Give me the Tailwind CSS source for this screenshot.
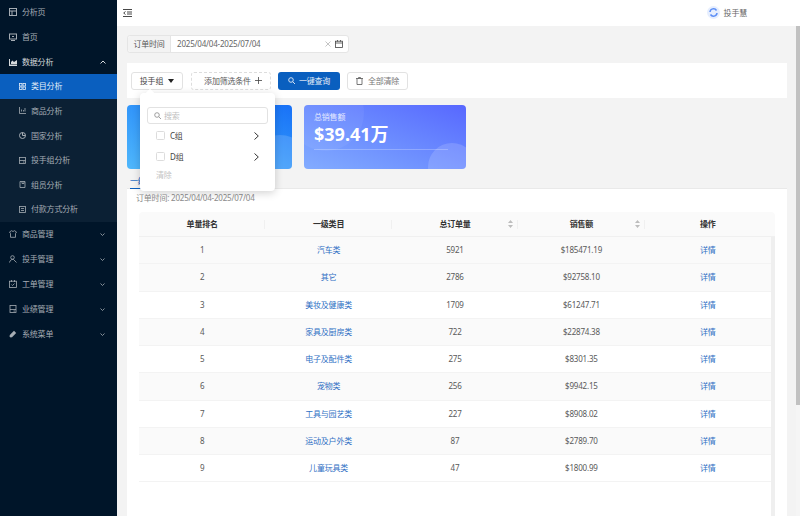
<!DOCTYPE html>
<html lang="zh"><head><meta charset="utf-8"><script src="https://cdn.jsdelivr.net/npm/@tailwindcss/browser@4"></script></head>
<body class="overflow-hidden">
<div class="flex w-[800px] h-[516px] overflow-hidden bg-[#f3f3f3] text-[8px] leading-[12px] tracking-[-0.2px] text-[#595959] font-['Noto_Sans','Noto_Sans_CJK_SC',sans-serif]">
  <!-- sidebar -->
  <aside class="w-[117px] shrink-0 bg-[#001529] text-[#a6adb4] flex flex-col">
    <div class="h-[24.65px] flex items-center pl-[9px] gap-[5px]"><svg class="w-[8px] h-[8px]" viewBox="0 0 8 8" fill="none" stroke="currentColor"><rect x=".5" y=".5" width="7" height="7"/><path d="M.5 3h7M3 3v4.500"/></svg>分析页</div>
    <div class="h-[24.65px] flex items-center pl-[9px] gap-[5px]"><svg class="w-[8px] h-[8px]" viewBox="0 0 8 8" fill="none" stroke="currentColor"><rect x=".5" y="1" width="7" height="5"/><path d="M2 7.500h4M3 3.500h2"/></svg>首页</div>
    <div class="h-[24.65px] flex items-center pl-[9px] gap-[5px] text-[#d5d9dc]"><svg class="w-[8px] h-[8px]" viewBox="0 0 8 8" fill="currentColor"><path d="M0 1h1v5.500h7V8H0zM2 4l1.500-1.500L5 4l3-2v4H2z"/></svg>数据分析<svg class="w-[6px] h-[4px] ml-auto mr-[11px]" viewBox="0 0 6 4" fill="none" stroke="currentColor"><path d="M.5 3.500 3 1l2.500 2.500"/></svg></div>
    <div class="bg-[#0b2034] flex flex-col">
      <div class="h-[24.65px] flex items-center pl-[19px] gap-[5px] bg-[#0a5fbf] text-[#e6eef8]"><svg class="w-[7px] h-[7px]" viewBox="0 0 7 7" fill="none" stroke="currentColor" stroke-width=".8"><rect x=".5" y=".5" width="2.500" height="2.500"/><rect x="4" y=".5" width="2.500" height="2.500"/><rect x=".5" y="4" width="2.500" height="2.500"/><rect x="4" y="4" width="2.500" height="2.500"/></svg>类目分析</div>
      <div class="h-[24.65px] flex items-center pl-[19px] gap-[5px]"><svg class="w-[7px] h-[7px]" viewBox="0 0 7 7" fill="none" stroke="currentColor" stroke-width=".8"><path d="M.5 0v6.500H7M2.500 4.500v-2M4.500 4.500V3M6 4.500V1"/></svg>商品分析</div>
      <div class="h-[24.65px] flex items-center pl-[19px] gap-[5px]"><svg class="w-[7px] h-[7px]" viewBox="0 0 7 7" fill="none" stroke="currentColor"><circle cx="3.500" cy="3.500" r="3"/><path d="M3.500 .5v3h3" /></svg>国家分析</div>
      <div class="h-[24.65px] flex items-center pl-[19px] gap-[5px]"><svg class="w-[7px] h-[7px]" viewBox="0 0 7 7" fill="none" stroke="currentColor" stroke-width=".8"><rect x=".5" y=".5" width="6" height="6"/><path d="M.5 3.500h6M4 5h1.500"/></svg>投手组分析</div>
      <div class="h-[24.65px] flex items-center pl-[19px] gap-[5px]"><svg class="w-[7px] h-[7px]" viewBox="0 0 7 7" fill="none" stroke="currentColor" stroke-width=".8"><path d="M1 .5h5v6H1zM3 .5v2h2v-2"/></svg>组员分析</div>
      <div class="h-[24.65px] flex items-center pl-[19px] gap-[5px]"><svg class="w-[7px] h-[7px]" viewBox="0 0 7 7" fill="none" stroke="currentColor" stroke-width=".8"><rect x=".5" y=".5" width="6" height="6"/><path d="M2 2.500h3M2 4.500h3"/></svg>付款方式分析</div>
    </div>
    <div class="h-[25px] flex items-center pl-[9px] gap-[5px]"><svg class="w-[8px] h-[8px]" viewBox="0 0 8 8" fill="none" stroke="currentColor" stroke-width=".8"><path d="M2.500.7 4 1.500 5.500.7 7.500 2 6.500 3.500V7.300h-5V3.500L.5 2z"/></svg>商品管理<svg class="w-[5px] h-[3px] ml-auto mr-[12px]" viewBox="0 0 5 3" fill="none" stroke="currentColor" stroke-width=".8"><path d="M.5.5 2.500 2.500 4.500.5"/></svg></div>
    <div class="h-[25px] flex items-center pl-[9px] gap-[5px]"><svg class="w-[8px] h-[8px]" viewBox="0 0 8 8" fill="none" stroke="currentColor" stroke-width=".8"><circle cx="3.500" cy="2.500" r="1.800"/><path d="M.5 7.500C1 5 3 4 4.500 4.500L7.500 7.500"/></svg>投手管理<svg class="w-[5px] h-[3px] ml-auto mr-[12px]" viewBox="0 0 5 3" fill="none" stroke="currentColor" stroke-width=".8"><path d="M.5.5 2.500 2.500 4.500.5"/></svg></div>
    <div class="h-[25px] flex items-center pl-[9px] gap-[5px]"><svg class="w-[8px] h-[8px]" viewBox="0 0 8 8" fill="none" stroke="currentColor" stroke-width=".8"><rect x=".5" y="1.200" width="7" height="6.300"/><path d="M2.500 0v2M5.500 0v2M2.500 4.500l1 1 2-2"/></svg>工单管理<svg class="w-[5px] h-[3px] ml-auto mr-[12px]" viewBox="0 0 5 3" fill="none" stroke="currentColor" stroke-width=".8"><path d="M.5.5 2.500 2.500 4.500.5"/></svg></div>
    <div class="h-[25px] flex items-center pl-[9px] gap-[5px]"><svg class="w-[8px] h-[8px]" viewBox="0 0 8 8" fill="none" stroke="currentColor" stroke-width=".8"><rect x="1" y=".5" width="6" height="7"/><path d="M1 4.500h6M4.500 6h1.500"/></svg>业绩管理<svg class="w-[5px] h-[3px] ml-auto mr-[12px]" viewBox="0 0 5 3" fill="none" stroke="currentColor" stroke-width=".8"><path d="M.5.5 2.500 2.500 4.500.5"/></svg></div>
    <div class="h-[25px] flex items-center pl-[9px] gap-[5px]"><svg class="w-[8px] h-[8px]" viewBox="0 0 8 8" fill="currentColor"><path d="M5 .8 7.200 3 3 7.200l-1.500.3-1-1 .3-1.500z"/></svg>系统菜单<svg class="w-[5px] h-[3px] ml-auto mr-[12px]" viewBox="0 0 5 3" fill="none" stroke="currentColor" stroke-width=".8"><path d="M.5.5 2.500 2.500 4.500.5"/></svg></div>
  </aside>

  <!-- right -->
  <div class="flex-1 min-w-0 flex flex-col relative">
    <header class="h-[26px] shrink-0 bg-white flex items-center pl-[6px]">
      <svg class="w-[9px] h-[8px] text-[#333]" viewBox="0 0 9 8" fill="none" stroke="currentColor" stroke-width=".9"><path d="M0 .5h9M4 3h5M4 5h5M0 7.500h9"/><path d="M2.500 2.500 .7 4l1.800 1.500" /></svg>
      <div class="ml-auto mr-[53px] flex items-center gap-[4px] mb-[1px]">
        <svg class="w-[13px] h-[13px]" viewBox="0 0 13 13"><circle cx="6.500" cy="6.500" r="6.500" fill="#e6eefe"/><path d="M3 6a3.500 3.500 0 0 1 6.500-1.500" fill="none" stroke="#5b8df6" stroke-width="1.500"/><path d="M10 7a3.500 3.500 0 0 1-6.500 1.500" fill="none" stroke="#5b8df6" stroke-width="1.500"/></svg>
        <span class="text-[#666]">投手慧</span>
      </div>
    </header>

    <main class="flex-1 min-h-0 pl-[10px] pr-[13px] pt-[9px] flex flex-col">
      <!-- date -->
      <div class="w-[222px] h-[18px] flex rounded-[3px] border border-[#e5e5e5] bg-white shrink-0">
        <div class="w-[43px] bg-[#f3f3f3] border-r border-[#e5e5e5] flex items-center justify-center rounded-l-[3px]">订单时间</div>
        <div class="flex-1 flex items-center pl-[6px] pr-[5px] text-[#666]">2025/04/04-2025/07/04
          <svg class="w-[6px] h-[6px] ml-auto text-[#aaa]" viewBox="0 0 6 6" fill="none" stroke="currentColor" stroke-width=".7"><path d="M.5.500l5 5M5.500.5l-5 5"/></svg>
          <svg class="w-[8px] h-[8px] ml-[4px] text-[#444]" viewBox="0 0 8 8" fill="none" stroke="currentColor" stroke-width=".8"><rect x=".5" y="1.200" width="7" height="6.300"/><path d="M.5 3h7M2.500 0v1.500M5.500 0v1.500"/></svg>
        </div>
      </div>

      <!-- filters -->
      <div class="mt-[10px] h-[35px] shrink-0 bg-white flex items-center pl-[4px]">
        <div class="w-[52px] h-[18px] rounded-[3px] border border-[#e2e2e2] flex items-center justify-center gap-[5px] text-[#444]">投手组<svg class="w-[6px] h-[4px]" viewBox="0 0 6 4" fill="#222"><path d="M0 0h6L3 4z"/></svg></div>
        <div class="ml-[8px] w-[80px] h-[18px] rounded-[3px] border border-dashed border-[#ddd] flex items-center justify-center gap-[4px] pl-[4px]">添加筛选条件<svg class="w-[7px] h-[7px]" viewBox="0 0 7 7" stroke="#444" stroke-width=".8"><path d="M3.500 0v7M0 3.500h7"/></svg></div>
        <div class="ml-[7px] w-[62px] h-[18px] rounded-[3px] bg-[#0a5fbf] text-[#e6eef8] flex items-center justify-center gap-[4px]"><svg class="w-[7px] h-[7px]" viewBox="0 0 7 7" fill="none" stroke="currentColor" stroke-width=".9"><circle cx="3" cy="3" r="2.300"/><path d="M4.800 4.800 7 7"/></svg>一键查询</div>
        <div class="ml-[7px] w-[61px] h-[18px] rounded-[3px] border border-[#e2e2e2] flex items-center justify-center gap-[5px] text-[#777]"><svg class="w-[7px] h-[8px]" viewBox="0 0 7 8" fill="none" stroke="#555" stroke-width=".8"><path d="M0 1.500h7M2.500 1.500V.5h2v1M1 1.500v6h5v-6"/></svg>全部清除</div>
      </div>

      <!-- stat cards -->
      <div class="mt-[7px] h-[64px] shrink-0 flex gap-[12px]">
        <div class="w-[165px] rounded-[4px] bg-gradient-to-tr from-[#4fb7fb] to-[#1971f7] relative overflow-hidden"><div class="absolute -right-[18px] -bottom-[26px] w-[60px] h-[60px] rounded-full bg-white/15"></div></div>
        <div class="w-[162px] rounded-[4px] bg-gradient-to-tr from-[#83acff] to-[#5867ff] relative overflow-hidden pl-[10px] pt-[6px] text-white">
          <div class="absolute -right-[10px] -bottom-[22px] w-[48px] h-[48px] rounded-full bg-white/15"></div>
          <div class="absolute -left-[16px] -top-[30px] w-[76px] h-[76px] rounded-full bg-white/5"></div>
          <div class="relative text-[#e4e9ff]">总销售额</div>
          <div class="relative text-[18px] leading-[22px] font-bold tracking-normal">$39.41万</div>
          <div class="relative mt-[4px] w-[134px] h-px bg-white/25"></div>
        </div>
      </div>

      <!-- tabs -->
      <div class="mt-[6px] h-[14px] shrink-0 pl-[3px] border-b border-[#e9e9e9]">
        <div class="w-[40px] h-[14px] border-b border-[#0a5fbf] text-[#0a5fbf]">一级类目</div>
      </div>

      <!-- table card -->
      <section class="flex-1 min-h-0 bg-white pl-[12px] pr-[12px]">
        <div class="h-[17px] pt-[3px] text-[#8c8c8c] -ml-[3px]">订单时间: 2025/04/04-2025/07/04</div>
        <div class="mt-[6px] w-[636px]">
          <div class="grid grid-cols-[126.4px_126.400px_126.400px_126.400px_130.400px] h-[25px] items-center bg-[#fafafa] rounded-t-[4px] border-b border-[#f0f0f0] text-center font-bold text-[#333]">
            <div class="relative h-full flex items-center justify-center">单量排名<span class="absolute right-0 top-[8px] h-[9px] w-px bg-[#f0f0f0]"></span></div>
            <div class="relative h-full flex items-center justify-center">一级类目<span class="absolute right-0 top-[8px] h-[9px] w-px bg-[#f0f0f0]"></span></div>
            <div class="relative h-full flex items-center justify-center">总订单量<svg class="absolute right-[5px] top-[8px] w-[5px] h-[8px]" viewBox="0 0 5 8" fill="#bdbdbd"><path d="M2.500 0 5 3H0zM2.500 8 0 5h5z"/></svg><span class="absolute right-0 top-[8px] h-[9px] w-px bg-[#f0f0f0]"></span></div>
            <div class="relative h-full flex items-center justify-center">销售额<svg class="absolute right-[5px] top-[8px] w-[5px] h-[8px]" viewBox="0 0 5 8" fill="#bdbdbd"><path d="M2.500 0 5 3H0zM2.500 8 0 5h5z"/></svg><span class="absolute right-0 top-[8px] h-[9px] w-px bg-[#f0f0f0]"></span></div>
            <div class="pr-[4px]">操作</div>
          </div>
          <div class="flex h-[290px]">
            <div class="w-[632px] shrink-0 flex flex-col text-center">
              <div class="grid grid-cols-5 h-[27.25px] items-center border-b border-[#f3f3f3] bg-[#fafafa]"><div>1</div><div class="text-[#2f6fc4]">汽车类</div><div>5921</div><div>$185471.19</div><div class="text-[#2f6fc4]">详情</div></div>
              <div class="grid grid-cols-5 h-[27.25px] items-center border-b border-[#f3f3f3] bg-[#fafafa]"><div>2</div><div class="text-[#2f6fc4]">其它</div><div>2786</div><div>$92758.10</div><div class="text-[#2f6fc4]">详情</div></div>
              <div class="grid grid-cols-5 h-[27.25px] items-center border-b border-[#f3f3f3]"><div>3</div><div class="text-[#2f6fc4]">美妆及健康类</div><div>1709</div><div>$61247.71</div><div class="text-[#2f6fc4]">详情</div></div>
              <div class="grid grid-cols-5 h-[27.25px] items-center border-b border-[#f3f3f3] bg-[#fafafa]"><div>4</div><div class="text-[#2f6fc4]">家具及厨房类</div><div>722</div><div>$22874.38</div><div class="text-[#2f6fc4]">详情</div></div>
              <div class="grid grid-cols-5 h-[27.25px] items-center border-b border-[#f3f3f3]"><div>5</div><div class="text-[#2f6fc4]">电子及配件类</div><div>275</div><div>$8301.35</div><div class="text-[#2f6fc4]">详情</div></div>
              <div class="grid grid-cols-5 h-[27.25px] items-center border-b border-[#f3f3f3] bg-[#fafafa]"><div>6</div><div class="text-[#2f6fc4]">宠物类</div><div>256</div><div>$9942.15</div><div class="text-[#2f6fc4]">详情</div></div>
              <div class="grid grid-cols-5 h-[27.25px] items-center border-b border-[#f3f3f3]"><div>7</div><div class="text-[#2f6fc4]">工具与园艺类</div><div>227</div><div>$8908.02</div><div class="text-[#2f6fc4]">详情</div></div>
              <div class="grid grid-cols-5 h-[27.25px] items-center border-b border-[#f3f3f3] bg-[#fafafa]"><div>8</div><div class="text-[#2f6fc4]">运动及户外类</div><div>87</div><div>$2789.70</div><div class="text-[#2f6fc4]">详情</div></div>
              <div class="grid grid-cols-5 h-[27.25px] items-center border-b border-[#f3f3f3]"><div>9</div><div class="text-[#2f6fc4]">儿童玩具类</div><div>47</div><div>$1800.99</div><div class="text-[#2f6fc4]">详情</div></div>
            </div>
            <div class="w-[4px] shrink-0 bg-[#efefef]"></div>
          </div>
        </div>
      </section>
    </main>

    <!-- page scrollbar -->
    <div class="absolute right-0 top-[26px] bottom-0 w-[4px] bg-[#f5f5f5]"><div class="h-[379px] bg-[#c1c1c1]"></div></div>

    <!-- dropdown -->
    <div class="absolute left-[23px] top-[93px] w-[135px] h-[98px] bg-white rounded-[4px] shadow-[0_2px_8px_rgba(0,0,0,0.18)] px-[7px] pt-[14px]">
      <div class="absolute left-[7px] -top-[3px] w-[6px] h-[6px] rotate-45 bg-white"></div>
      <div class="h-[17px] w-[121px] rounded-[3px] border border-[#e2e2e2] flex items-center pl-[6px] gap-[3px] text-[#bfbfbf]"><svg class="w-[7px] h-[7px]" viewBox="0 0 7 7" fill="none" stroke="#888" stroke-width=".8"><circle cx="3" cy="3" r="2.300"/><path d="M4.800 4.800 7 7"/></svg>搜索</div>
      <div class="mt-[1px] h-[21px] flex items-center pl-[9px] text-[#444]"><span class="w-[9px] h-[9px] rounded-[1.500px] border border-[#dcdcdc] mr-[5px]"></span>C组<svg class="w-[5px] h-[8px] ml-auto mr-[9px]" viewBox="0 0 5 8" fill="none" stroke="#333"><path d="M.5.5 4.300 4 .5 7.500"/></svg></div>
      <div class="h-[21px] flex items-center pl-[9px] text-[#444]"><span class="w-[9px] h-[9px] rounded-[1.500px] border border-[#dcdcdc] mr-[5px]"></span>D组<svg class="w-[5px] h-[8px] ml-auto mr-[9px]" viewBox="0 0 5 8" fill="none" stroke="#333"><path d="M.5.5 4.300 4 .5 7.500"/></svg></div>
      <div class="mt-[2px] pl-[9px] text-[#c4c4c4]">清除</div>
    </div>
  </div>
</div>
</body></html>
